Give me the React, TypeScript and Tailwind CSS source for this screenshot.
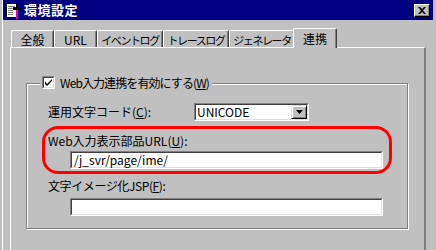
import React from 'react';

const font = "font-['Noto_Sans_CJK_JP','Noto_Sans','Liberation_Sans',sans-serif]";

const TitleIcon: React.FC = () => (
  <svg width="17" height="17" viewBox="0 0 17 17" className="shrink-0">
    <rect x="1.5" y="1.5" width="10" height="14" fill="#fff" stroke="#000" />
    <line x1="3" y1="4.5" x2="10" y2="4.5" stroke="#808080" />
    <line x1="3" y1="6.5" x2="10" y2="6.5" stroke="#808080" />
    <line x1="3" y1="8.5" x2="8" y2="8.5" stroke="#808080" />
    <line x1="3" y1="10.5" x2="8" y2="10.5" stroke="#808080" />
    <line x1="3" y1="12.5" x2="8" y2="12.5" stroke="#808080" />
    <rect x="8" y="5" width="8" height="3" fill="#000" />
    <rect x="11" y="8" width="2" height="9" fill="#e000a0" />
  </svg>
);

const Tab: React.FC<{ label: string; w: string; tight?: boolean; active?: boolean }> = ({ label, w, tight, active }) => {
  const text = tight ? 'text-[11px] tracking-[-1.4px]' : '';
  return active ? (
    <div
      className={`relative z-10 -mx-[2px] -mb-px h-[20px] ${w} flex justify-center whitespace-nowrap pt-[3px] leading-[14px] bg-[#c0c0c0] border-t border-l border-white border-r border-r-[#404040] shadow-[inset_-1px_0_0_#808080] rounded-t-[2px]`}
    >
      {label}
    </div>
  ) : (
    <div
      className={`h-[17px] ${w} ${text} flex justify-center whitespace-nowrap pt-[2px] leading-[14px] bg-[#c0c0c0] border-t border-l border-white border-r border-r-[#404040] shadow-[inset_-1px_0_0_#808080] rounded-t-[2px]`}
    >
      {label}
    </div>
  );
};

const Sunken: React.FC<{ className: string; children?: React.ReactNode }> = ({ className, children }) => (
  <div className={`border border-t-[#808080] border-l-[#808080] border-b-white border-r-white ${className}`}>
    <div className="h-full w-full border border-t-[#404040] border-l-[#404040] border-b-[#dfdfdf] border-r-[#dfdfdf] bg-white flex items-center">
      {children}
    </div>
  </div>
);

const App: React.FC = () => {
  return (
    <div className={`w-[436px] h-[250px] overflow-hidden bg-[#c0c0c0] text-[12px] text-black ${font}`}>
      <div className="ml-[2px] mr-[2px] h-full border-l border-white">
        {/* Title bar */}
        <div className="h-[20px] mr-px bg-[#000080] flex items-center pl-[2px] pr-[3px]">
          <TitleIcon />
          <span className="ml-[2px] text-white font-bold text-[13px] leading-[16px] tracking-[0.5px]">環境設定</span>
          <div className="ml-auto w-[16px] h-[13px] bg-[#c0c0c0] border border-t-white border-l-white border-b-black border-r-black shadow-[inset_-1px_-1px_0_#808080] flex items-center justify-center">
            <svg width="8" height="7" viewBox="0 0 8 7">
              <path d="M0 0h2l2 2 2-2h2L5 3.5 8 7H6L4 5 2 7H0l3-3.5z" fill="#000" />
            </svg>
          </div>
        </div>

        {/* Tabs */}
        <div className="mt-[8px] pl-[8px] h-[19px] flex items-end">
          <Tab label="全般" w="w-[43px]" />
          <Tab label="URL" w="w-[43px]" />
          <Tab label="イベントログ" w="w-[66px]" tight />
          <Tab label="トレースログ" w="w-[66px]" tight />
          <Tab label="ジェネレータ" w="w-[66px]" tight />
          <Tab label="連携" w="w-[44px]" active />
        </div>

        {/* Tab panel */}
        <div className="ml-[7px] mr-[8px] h-[220px] border-t border-l border-white border-r-2 border-r-[#808080]">
          <div className="ml-[15px] mt-[35px] w-[382px] h-[146px] relative border border-[#808080] shadow-[1px_1px_0_#fff,inset_1px_1px_0_#fff]">
            {/* legend */}
            <div className="-mt-[8px] ml-[13px] w-fit h-[13px] px-[2px] flex items-center bg-[#c0c0c0]">
              <div className="w-[13px] h-[13px] border border-t-[#808080] border-l-[#808080] border-b-white border-r-white">
                <div className="w-full h-full bg-white border border-t-[#404040] border-l-[#404040] border-b-[#dfdfdf] border-r-[#dfdfdf] flex items-center justify-center">
                  <svg width="7" height="7" viewBox="0 0 7 7">
                    <path d="M0 2v3l2 2 5-5V-0L2 5z" fill="#000" />
                  </svg>
                </div>
              </div>
              <span className="ml-[5px] leading-[14px] pr-[1px] tracking-[-0.9px]">
                Web入力連携を有効にする(<span className="underline">W</span>)
              </span>
            </div>

            {/* 運用文字コード */}
            <div className="mt-[14px] pl-[21px] flex items-center">
              <span className="w-[146px] leading-[14px]">
                運用文字コード(<span className="underline">C</span>):
              </span>
              <Sunken className="w-[115px] h-[18px]">
                <span className="pl-[1px] leading-[14px]">UNICODE</span>
                <div className="ml-auto w-[16px] h-full bg-[#c0c0c0] border border-t-[#dfdfdf] border-l-[#dfdfdf] border-b-black border-r-black shadow-[inset_1px_1px_0_#fff,inset_-1px_-1px_0_#808080] flex items-center justify-center">
                  <svg width="7" height="4" viewBox="0 0 7 4">
                    <path d="M0 0h7L3.5 4z" fill="#000" />
                  </svg>
                </div>
              </Sunken>
            </div>

            {/* URL */}
            <div className="mt-[13px] pl-[21px] h-[14px] leading-[14px]">
              Web入力表示部品URL(<span className="underline">U</span>):
            </div>
            <Sunken className="mt-[3px] ml-[43px] w-[313px] h-[18px]">
              <span className="pl-[2px] leading-[14px]">/j_svr/page/ime/</span>
            </Sunken>

            {/* JSP */}
            <div className="mt-[10px] pl-[21px] h-[14px] leading-[14px] tracking-[-0.4px]">
              文字イメージ化JSP(<span className="underline">F</span>):
            </div>
            <Sunken className="mt-[5px] ml-[43px] w-[313px] h-[18px]" />

            {/* red annotation */}
            <div className="absolute left-[15px] top-[42px] w-[350px] h-[48px] border-[3px] border-[#ff0000] rounded-[16px] pointer-events-none" />
          </div>
        </div>
      </div>
    </div>
  );
};

export default App;
